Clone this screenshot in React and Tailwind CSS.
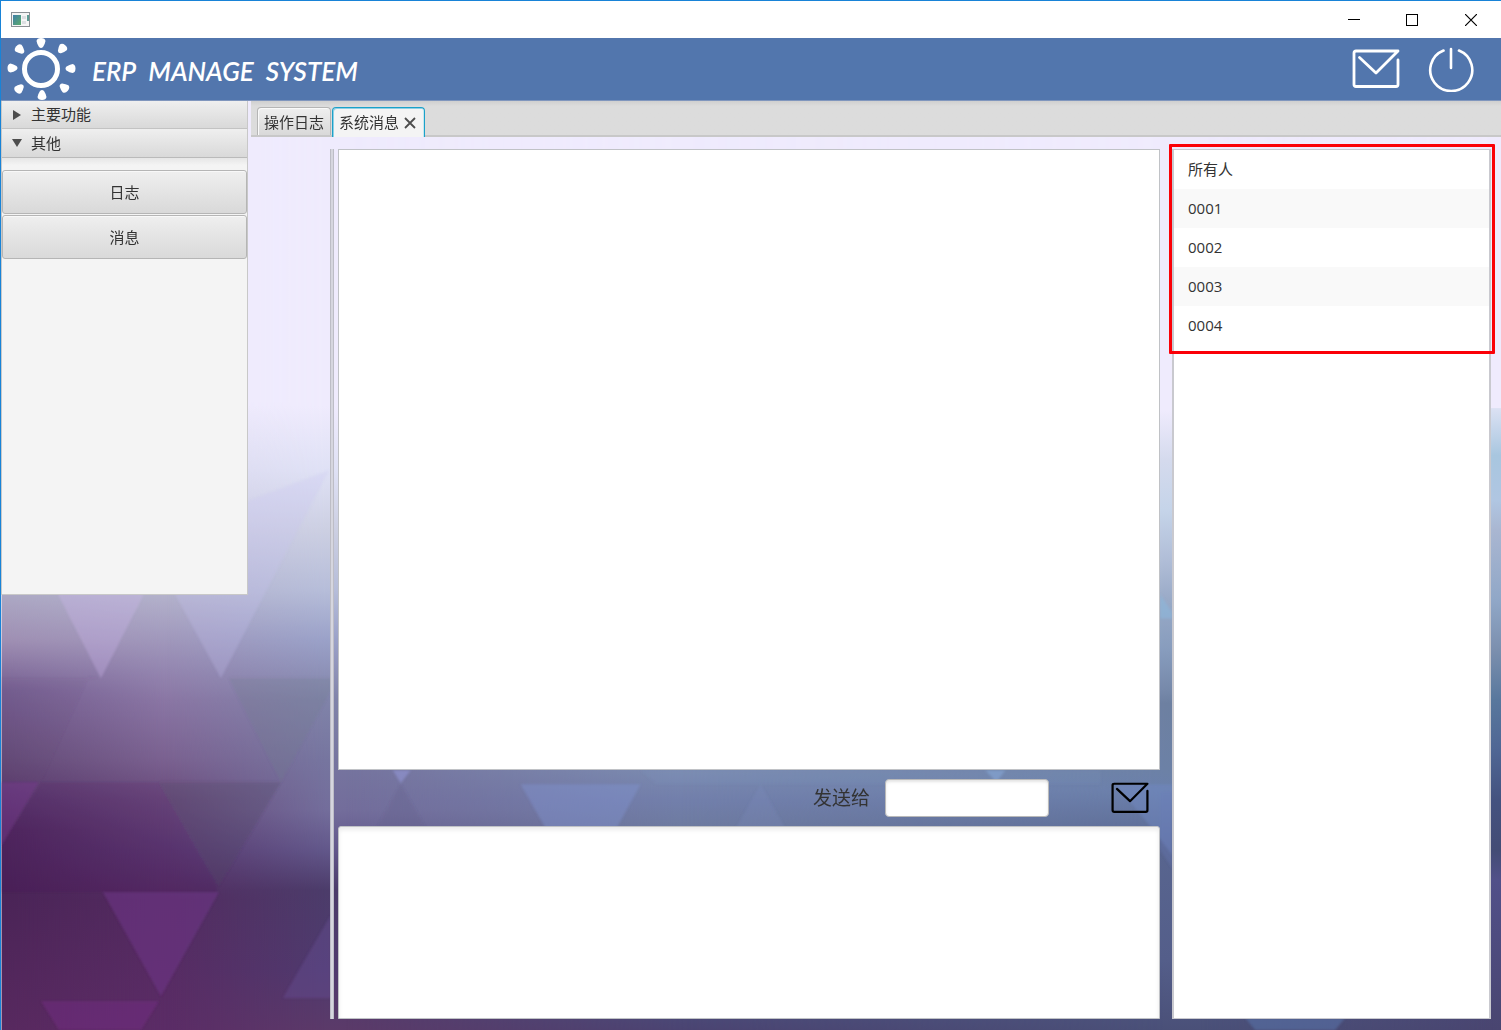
import React, { useState } from "react";

const columns = [
  { id: "a", from: 0, to: 1, stops: [[0, "#efebfd"], [400, "#efebfd"], [520, "#c9c8e0"], [595, "#aca8c4"], [640, "#9f8fb3"], [690, "#755e91"], [760, "#644a77"], [800, "#57366a"], [830, "#4f2a5e"], [890, "#4a2457"], [1030, "#58295f"]] },
  { id: "b", from: 0, to: 165, stops: [[0, "#efebfd"], [400, "#efebfd"], [520, "#cfcee6"], [595, "#b3b1cb"], [630, "#a49dbf"], [670, "#9486b0"], [700, "#8a76a4"], [760, "#7a6190"], [800, "#694b7c"], [850, "#5a3a70"], [900, "#532b60"], [1030, "#5b2c66"]] },
  { id: "c", from: 165, to: 325, stops: [[0, "#efebfd"], [405, "#efebfd"], [470, "#dfe1f5"], [530, "#cccfe2"], [590, "#b6bdd9"], [640, "#9aa1c8"], [670, "#8e92b8"], [700, "#8083a9"], [760, "#76759f"], [810, "#736d9b"], [850, "#62578a"], [890, "#4c3c6a"], [970, "#4f3a6e"], [1030, "#5b3a69"]] },
  { id: "d", from: 345, to: 680, stops: [[0, "#efebfd"], [405, "#efebfd"], [600, "#a9b6d5"], [770, "#7b8bb0"], [800, "#727fab"], [826, "#6e7ba0"], [1018, "#4b4876"], [1030, "#4b4472"]] },
  { id: "e", from: 680, to: 1165, stops: [[0, "#efebfd"], [410, "#efebfd"], [460, "#d4daed"], [510, "#c5d4e9"], [560, "#b0bdd7"], [600, "#99aac7"], [650, "#879cbd"], [690, "#7689aa"], [703, "#6d80a1"], [770, "#6c81a6"], [790, "#6b80ab"], [850, "#58658f"], [960, "#545e8a"], [1030, "#4a5078"]] },
  { id: "f", from: 1200, to: 1495, stops: [[0, "#efebfd"], [407, "#efebfd"], [408, "#dbe1f3"], [440, "#b9cfe6"], [455, "#a8c6df"], [500, "#b0c6e2"], [530, "#a9b6d1"], [600, "#90a7c7"], [650, "#7b8fae"], [700, "#58779d"], [750, "#4f6694"], [800, "#44527f"], [850, "#434c75"], [880, "#515089"], [1030, "#494570"]] },
];

const triangles = [
  ["55,590 145,590 100,678", "#d0b8f2", 0.3],
  ["172,590 248,500 328,470 220,678", "#c9c2f2", 0.25],
  ["0,678 100,678 88,676 40,782 0,782", "#5f4673", 0.07],
  ["228,678 330,678 330,690 280,782", "#6f7a8c", 0.25],
  ["158,782 280,782 218,886", "#4e4560", 0.26],
  ["40,782 158,782 216,886 216,892 0,892 0,846", "#4a2458", 0.12],
  ["0,782 38,782 0,846", "#7a3592", 0.42],
  ["102,892 218,892 160,996", "#6f3588", 0.55],
  ["40,1001 158,1001 140,1030 58,1030", "#782f88", 0.45],
  ["282,998 330,915 330,998", "#6a5097", 0.4],
  ["392,770 410,770 400,783", "#9a9de0", 0.5],
  ["400,784 425,828 376,828", "#66618b", 0.3],
  ["520,784 640,784 616,828 545,828", "#8396d4", 0.4],
  ["655,784 640,770 1100,770 1100,784", "#7e9cc0", 0.15],
  ["760,784 785,828 735,828", "#8191c4", 0.2],
  ["985,770 1005,770 996,782", "#8bb0e0", 0.5],
  ["1115,784 1172,784 1172,855 1150,826", "#7189c4", 0.45],
  ["1160,594 1172,612 1172,618 1160,618", "#8cb8dc", 0.6],
  ["1160,792 1172,792 1172,868 1160,850", "#6a79ba", 0.3],
  ["1245,1018 1345,1018 1335,1030 1255,1030", "#5a78b0", 0.5],
];

function Backdrop() {
  return (
    <svg className="absolute inset-0 -z-10 h-full w-full" viewBox="0 0 1501 1030" preserveAspectRatio="none" aria-hidden="true">
      <defs>
        {columns.map((c) => (
          <React.Fragment key={c.id}>
            <linearGradient id={"v" + c.id} x1="0" y1="0" x2="0" y2="1030" gradientUnits="userSpaceOnUse">
              {c.stops.map(([y, color]) => (
                <stop key={y} offset={y / 1030} stopColor={color} />
              ))}
            </linearGradient>
            <linearGradient id={"h" + c.id} x1={c.from} y1="0" x2={c.to} y2="0" gradientUnits="userSpaceOnUse">
              <stop offset="0" stopColor="#fff" stopOpacity="0" />
              <stop offset="1" stopColor="#fff" />
            </linearGradient>
            <mask id={"m" + c.id} maskUnits="userSpaceOnUse" x="0" y="0" width="1501" height="1030">
              <rect width="1501" height="1030" fill={"url(#h" + c.id + ")"} />
            </mask>
          </React.Fragment>
        ))}
        <filter id="soft" x="-5%" y="-5%" width="110%" height="110%">
          <feGaussianBlur stdDeviation="1" />
        </filter>
      </defs>
      {columns.map((c) => (
        <rect key={c.id} width="1501" height="1030" fill={"url(#v" + c.id + ")"} mask={"url(#m" + c.id + ")"} />
      ))}
      <g filter="url(#soft)">
        {triangles.map(([points, fill, opacity]) => (
          <polygon key={points} points={points} fill={fill} opacity={opacity} />
        ))}
      </g>
    </svg>
  );
}

function MailIcon({ className }) {
  return (
    <svg className={className} viewBox="0 0 48 40" fill="none" stroke="currentColor" strokeWidth="2.800" strokeLinecap="round" strokeLinejoin="round" aria-hidden="true">
      <path d="M46 11V35.500q0 2-2 2H4q-2 0-2-2V4q0-2 2-2H46L24 24 7.500 8.500" />
    </svg>
  );
}

function SunLogo() {
  return (
    <svg className="h-[62px] w-[72px]" viewBox="0 0 72 62" fill="#fff" aria-hidden="true">
      <circle cx="35" cy="31" r="16.500" fill="none" stroke="#fff" strokeWidth="5" />
      {[
        [35, 5, 0], [56, 11, 40], [64.5, 30.5, 90], [58, 49.5, 130],
        [36, 57, 180], [13.5, 50.5, 225], [6.5, 30, 270], [14, 11.5, 312],
      ].map(([x, y, r]) => (
        <path key={r} transform={`translate(${x} ${y}) rotate(${r})`} d="M-2 4Q-4 1-4.500-2Q-4-5 0-5Q4-5 4.500-2Q4 1 2 4Q0 6-2 4Z" />
      ))}
    </svg>
  );
}

const bevel = "bg-gradient-to-b from-[#efefef] to-[#d9d9d9]";

export default function App() {
  const [tab, setTab] = useState("messages");
  const [recipient, setRecipient] = useState("");
  return (
    <div className="relative isolate flex min-h-screen flex-col border-t border-l border-[#1883d7] font-['Open_Sans','Noto_Sans_CJK_SC',sans-serif] text-[15px] text-[#333]">
      <Backdrop />
      <div className="flex h-[37px] shrink-0 items-center justify-between bg-white pl-[10px]">
        <svg className="h-4 w-5" viewBox="0 0 20 16" aria-hidden="true">
          <defs>
            <linearGradient id="app" x1="0" y1="0" x2="1" y2="1">
              <stop offset="0" stopColor="#3f7fa8" />
              <stop offset="1" stopColor="#5cab6c" />
            </linearGradient>
          </defs>
          <rect x="0.500" y="0.500" width="18" height="14" fill="#f5f5f5" stroke="#8b9095" />
          <rect x="2" y="3" width="8" height="10" fill="url(#app)" />
          <path d="M11 4h4v3h-4zM11 9h4v3h-4z" fill="#dcdfe2" />
          <path d="M16 3h2v6h-2z" fill="#5d9c94" />
        </svg>
        <div className="flex h-full text-black">
          <button aria-label="Minimize" className="flex w-[58px] items-center justify-center">
            <svg className="h-3 w-3" viewBox="0 0 12 12" shapeRendering="crispEdges"><path d="M0 5.500H12" stroke="currentColor" /></svg>
          </button>
          <button aria-label="Maximize" className="flex w-[58px] items-center justify-center">
            <svg className="h-3 w-3" viewBox="0 0 12 12" shapeRendering="crispEdges"><rect x="0.500" y="0.500" width="11" height="11" fill="none" stroke="currentColor" /></svg>
          </button>
          <button aria-label="Close" className="flex w-[60px] items-center justify-center">
            <svg className="h-3 w-3" viewBox="0 0 12 12"><path d="M0 0L12 12M12 0L0 12" stroke="currentColor" strokeWidth="1.200" /></svg>
          </button>
        </div>
      </div>

      <header className="flex h-[63px] shrink-0 items-center justify-between border-b border-[#8096bd] bg-[#5276ad] pr-[27px] pl-[5px] text-white">
        <div className="flex items-center gap-[14px]">
          <SunLogo />
          <h1 className="flex gap-3 pt-1 font-['Lato',sans-serif] text-[26px] font-semibold italic">
            <span>ERP</span> <span>MANAGE</span> <span>SYSTEM</span>
          </h1>
        </div>
        <div className="flex items-center gap-7">
          <button aria-label="Messages"><MailIcon className="h-10 w-12" /></button>
          <button aria-label="Log out">
            <svg className="h-[46px] w-[46px]" viewBox="0 0 46 46" fill="none" stroke="currentColor" strokeWidth="2.600" strokeLinecap="round">
              <path d="M23 3V22M15.500 4.500A21 21 0 1 0 31 4.500" />
            </svg>
          </button>
        </div>
      </header>

      <div className="flex flex-1 gap-[3px]">
        <nav className="flex h-[494px] w-[247px] shrink-0 flex-col border-x border-b border-[#c8c8c8] bg-[#f4f4f4]">
          <button className={"flex h-7 shrink-0 items-center gap-[9px] border-b border-[#c3c3c3] pl-[10px] " + bevel}>
            <svg className="h-[10px] w-[10px]" viewBox="0 0 10 10" fill="#4d4d4d"><path d="M1 0L9 5L1 10z" /></svg>
            主要功能
          </button>
          <button className={"flex h-[29px] shrink-0 items-center gap-[9px] border-b border-[#bababa] pl-[10px] " + bevel}>
            <svg className="h-[10px] w-[10px]" viewBox="0 0 10 10" fill="#4d4d4d"><path d="M0 1H10L5 9z" /></svg>
            其他
          </button>
          <div className="h-3 shrink-0 bg-gradient-to-b from-[#e6e6e6] to-[#f4f4f4] to-60%" />
          <button className={"mb-px h-11 shrink-0 rounded-[3px] border border-[#b5b5b5] shadow-[inset_0_1px_0_#f8f8f8] " + bevel}>日志</button>
          <button className={"h-11 shrink-0 rounded-[3px] border border-[#b5b5b5] shadow-[inset_0_1px_0_#f8f8f8] " + bevel}>消息</button>
        </nav>

        <main className="flex min-w-0 flex-1 flex-col">
          <div role="tablist" className="flex h-9 shrink-0 items-end gap-px border-b-2 border-[#c8c8c8] bg-gradient-to-b from-[#cfcfcf] to-[#dcdcdc] to-15% pl-[6px]">
            <button role="tab" aria-selected={tab === "log"} onClick={() => setTab("log")} className={"h-[28px] rounded-t-[4px] border border-b-0 border-[#b5b5b5] px-[6px] pt-px shadow-[inset_1px_1px_0_#fafafa] " + bevel}>
              操作日志
            </button>
            <div className="-mb-[2px] flex h-[30px] items-center gap-[5px] rounded-t-[4px] border border-b-0 border-[#1ba1c9] bg-[#f4f4f4] pr-2 pl-[6px] shadow-[inset_1px_1px_0_#8fd0e4,inset_-1px_0_0_#c5e6f0]">
              <button role="tab" aria-selected={tab === "messages"} onClick={() => setTab("messages")}>系统消息</button>
              <button aria-label="Close tab">
                <svg className="h-[12px] w-[12px]" viewBox="0 0 12 12" stroke="#4d4d4d" strokeWidth="1.800"><path d="M1 1L11 11M11 1L1 11" /></svg>
              </button>
            </div>
          </div>

          <div className="flex flex-1 pt-3 pr-[10px] pb-[11px] pl-[79px]">
            <div className="mr-1 w-1 shrink-0 border-x border-[#bdbdc6] bg-[#d6d6df]" />
            <div className="flex min-w-0 flex-1 flex-col">
              <textarea aria-label="Message history" readOnly className="w-full flex-1 resize-none border border-[#c0c2c6] bg-white outline-none" />
              <div className="flex h-14 shrink-0 items-center justify-end pr-[11px]">
                <label htmlFor="recipient" className="mr-[15px] text-[19px]">发送给</label>
                <input id="recipient" value={recipient} onChange={(e) => setRecipient(e.target.value)} className="h-[38px] w-[164px] rounded-[4px] border border-[#b9b9b9] bg-white px-2 shadow-[inset_0_2px_3px_#e4e4e4] outline-none" />
                <button aria-label="Send" className="ml-[62px] text-black"><MailIcon className="h-8 w-[38px]" /></button>
              </div>
              <textarea aria-label="New message" className="h-[193px] w-full shrink-0 resize-none rounded-t-[3px] border border-[#c0c2c6] bg-white shadow-[inset_0_3px_4px_#ececec] outline-none" />
            </div>
            <div className="relative ml-3 w-[319px] shrink-0 border-x-2 border-y border-[#c9c9cf] bg-white">
              <ul>
                {["所有人", "0001", "0002", "0003", "0004"].map((name) => (
                  <li key={name} className="flex h-[39px] odd:bg-white even:bg-[#f9f9f9]">
                    <button className="flex-1 pl-[14px] text-left" onClick={() => setRecipient(name)}>{name}</button>
                  </li>
                ))}
              </ul>
              <div className="pointer-events-none absolute -top-[6px] -right-[6px] -left-[5px] h-[210px] rounded-[1px] border-3 border-[#fb0007]" />
            </div>
          </div>
        </main>
      </div>
    </div>
  );
}
